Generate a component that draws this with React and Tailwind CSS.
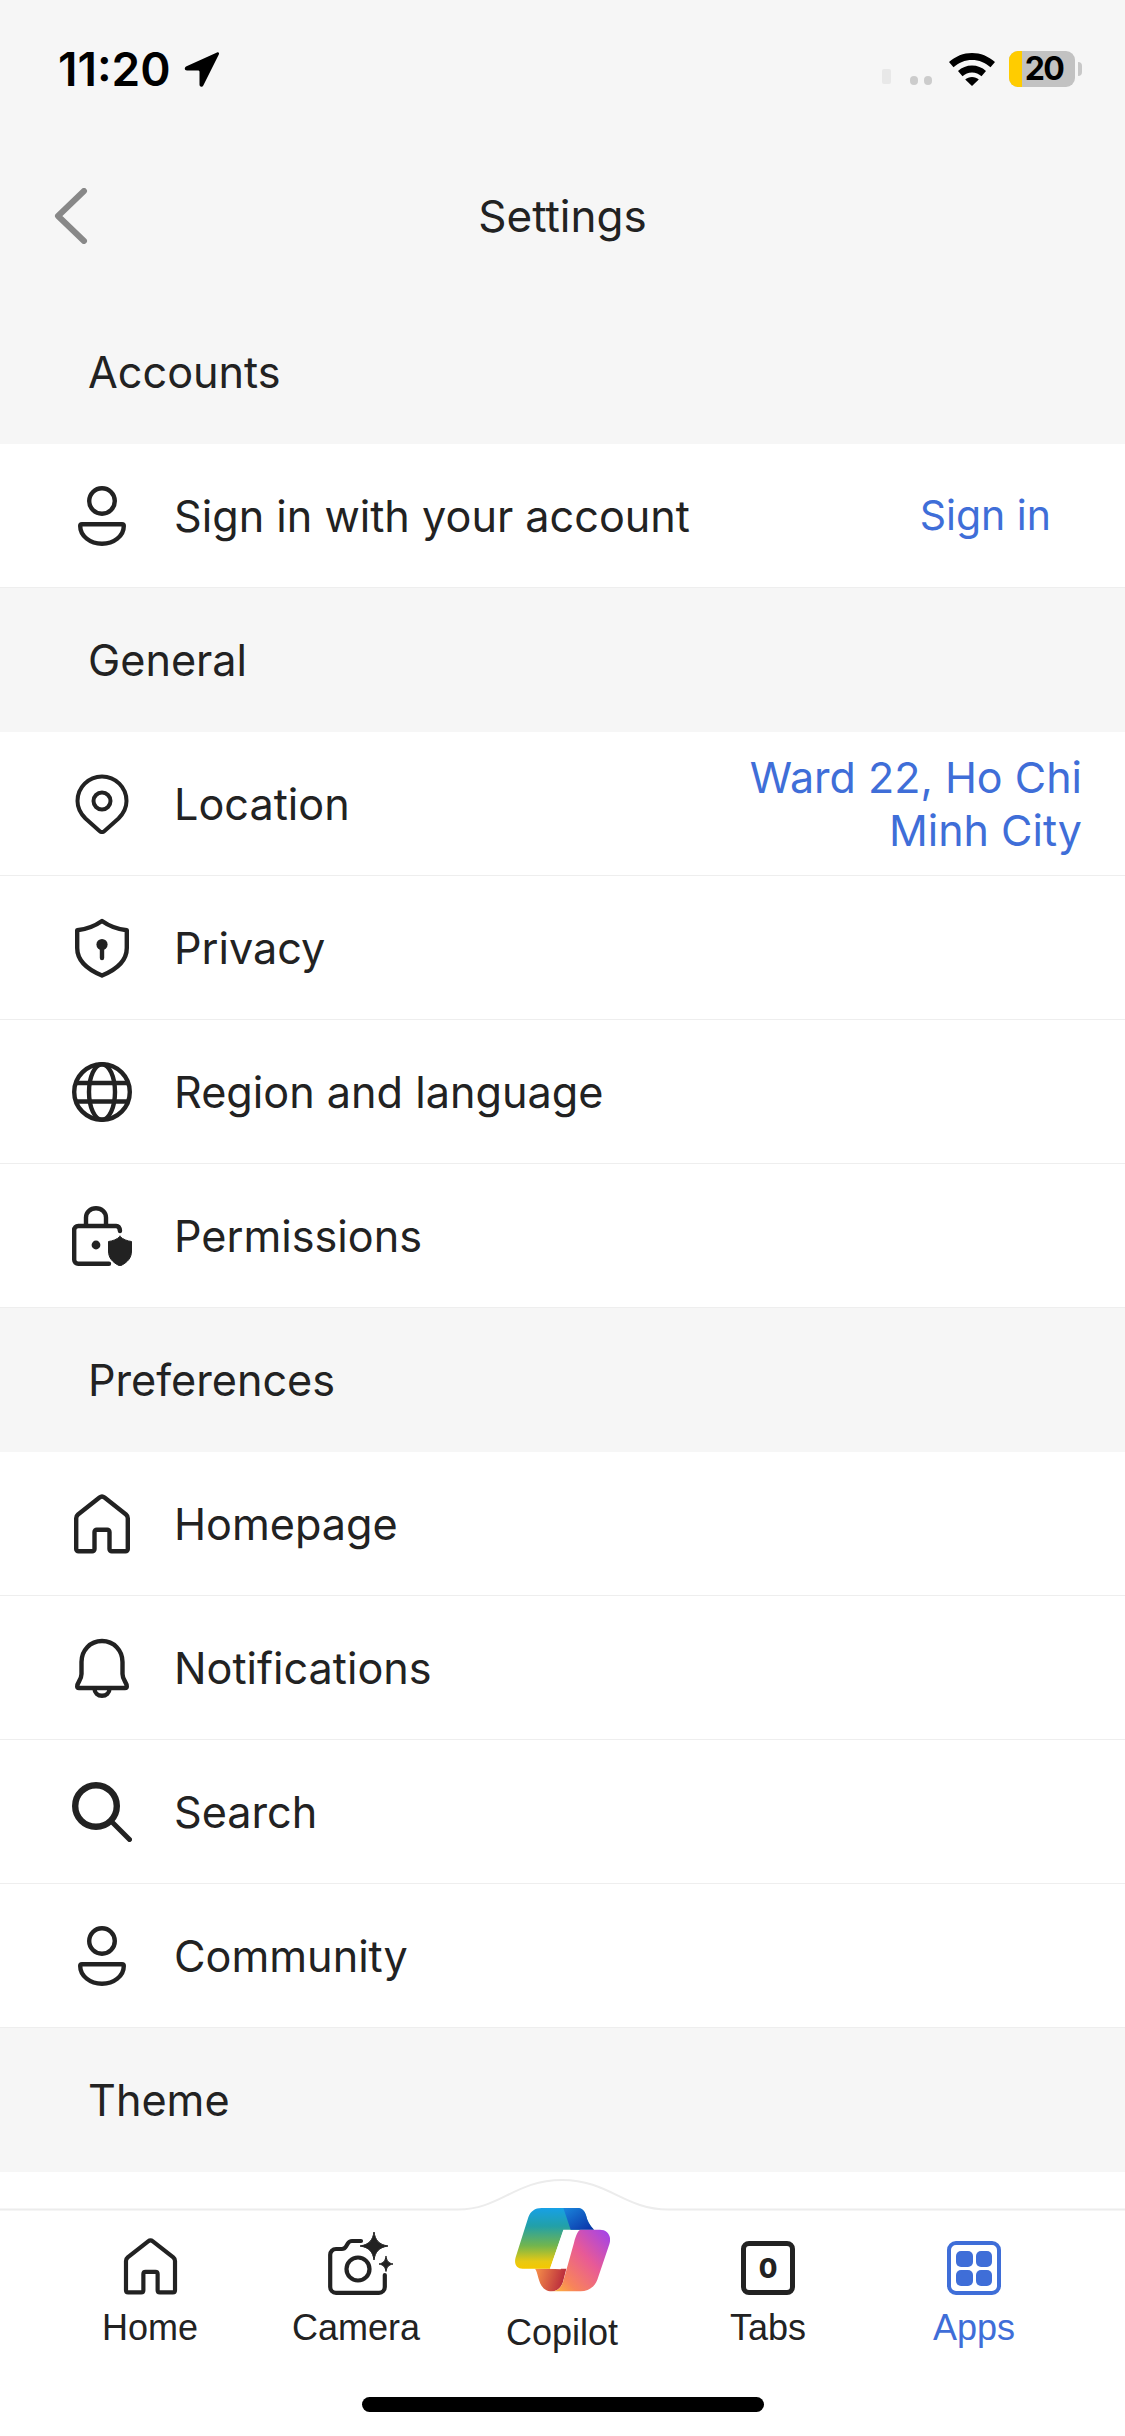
import React from "react";

const ink = "#222222";

const Stroke = ({ children, size = 60, sw = 4.4, color = ink }) => (
  <svg width={size} height={size} viewBox="0 0 60 60" fill="none" stroke={color} strokeWidth={sw} strokeLinecap="round" strokeLinejoin="round">
    {children}
  </svg>
);

const Person = () => (
  <Stroke>
    <circle cx="30" cy="15" r="12.8" />
    <path d="M10 38.2h40c1 0 1.8.8 1.8 1.8 0 10-10 17.8-21.8 17.8S8.200 50 8.200 40c0-1 .8-1.8 1.800-1.800z" />
  </Stroke>
);
const Pin = () => (
  <Stroke sw="4">
    <path d="M30 2.500C16.500 2.500 5.500 13.500 5.500 27c0 7 3 12.500 8 17.500L27.500 57c1.500 1.300 3.500 1.300 5 0L46.500 44.500c5-5 8-10.500 8-17.500C54.500 13.500 43.500 2.500 30 2.500z" />
    <circle cx="30" cy="27" r="8.500" />
  </Stroke>
);
const Shield = () => (
  <Stroke>
    <path d="M30 3c7 5 14 8 24.800 9.300V30c0 12-9 21-24.800 27.500C14.200 51 5.200 42 5.200 30V12.300C16 11 23 8 30 3z" />
    <circle cx="30" cy="26.500" r="5.600" fill={ink} stroke="none" />
    <path d="M30 28v12" />
  </Stroke>
);
const Globe = () => (
  <Stroke>
    <circle cx="30" cy="30" r="27.800" />
    <ellipse cx="30" cy="30" rx="13" ry="27.800" />
    <path d="M5 21h50M5 39.500h50" />
  </Stroke>
);
const LockShield = () => (
  <Stroke>
    <path d="M37 57.800H6.200c-2.200 0-4-1.800-4-4V24c0-2.200 1.800-4 4-4h38c2 0 3.500 1.500 3.800 5" />
    <path d="M14 19V11.500C14 6 18.500 2.200 24 2.200S34 6 34 11.500V19" />
    <circle cx="24" cy="39" r="4.400" fill={ink} stroke="none" />
    <path d="M48 30.500c3 3 7.500 4.500 11.500 5v9.500c0 7-4 11.500-11.500 15-7.500-3.500-11.500-8-11.500-15v-9.500c4-.5 8.500-2 11.500-5z" fill={ink} stroke={ink} strokeWidth="1" />
  </Stroke>
);
const House = ({ size = 60 }) => (
  <Stroke size={size}>
    <path d="M27.500 3.500 6 20.500c-1.200 1-1.800 2.200-1.800 3.700V55c0 1.300 1 2.300 2.300 2.300h13.700c1.300 0 2.300-1 2.300-2.300V38c0-1.300 1-2.300 2.300-2.300h10.400c1.300 0 2.300 1 2.300 2.300v17c0 1.300 1 2.300 2.300 2.300h13.700c1.300 0 2.300-1 2.300-2.300V24.200c0-1.500-.6-2.700-1.800-3.700L32.500 3.500c-1.500-1.200-3.500-1.200-5 0z" />
  </Stroke>
);
const Bell = () => (
  <Stroke>
    <path d="M30 3C18 3 9.500 12.500 9.500 24v12c0 3-1 5-2.500 7.500-1.200 2-1.800 3.500-1.800 5 0 1 .8 1.500 1.800 1.500h46c1 0 1.800-.5 1.800-1.500 0-1.500-.6-3-1.800-5-1.500-2.500-2.500-4.500-2.500-7.500V24C50.500 12.500 42 3 30 3z" />
    <path d="M22.500 50.500c0 4.500 3.500 7.300 7.500 7.300s7.500-2.800 7.500-7.300" />
  </Stroke>
);
const Search = () => (
  <Stroke sw="5">
    <circle cx="24" cy="24" r="20.800" strokeWidth="6.400" />
    <path d="m40 40 17.500 17.500" />
  </Stroke>
);
const CameraSpark = () => (
  <svg width="66" height="63" viewBox="0 0 66 63" fill="none" stroke={ink} strokeWidth="4.200" strokeLinecap="round" strokeLinejoin="round" className="ml-[10px]">
    <path d="M33 9h-9c-2 0-3.200.8-4.200 2.500L18 14.500c-1 1.700-2.200 2.500-4.200 2.500H8c-3.300 0-5.800 2.500-5.800 5.800v32.200c0 3.300 2.500 5.800 5.800 5.800h43c3.300 0 5.800-2.500 5.800-5.800V43" />
    <circle cx="30" cy="37" r="11.500" />
    <path d="M46 0c1.300 8.500 5 12.500 14 14-9 1.500-12.700 5.500-14 14-1.300-8.500-5-12.500-14-14 9-1.500 12.700-5.500 14-14z" fill={ink} stroke={ink} strokeWidth="1" />
    <path d="M58 24.500c.8 4.500 2.700 6.700 7 7.500-4.300.8-6.200 3-7 7.500-.8-4.500-2.700-6.700-7-7.500 4.300-.8 6.200-3 7-7.500z" fill={ink} stroke={ink} strokeWidth="1" />
  </svg>
);
const Wifi = () => (
  <svg width="46" height="33" viewBox="0 0 46 33" fill="#000">
    <path d="M23 0C14.500 0 6.500 3.300 0 9l4.500 5.300C9.500 9.700 16 7 23 7s13.500 2.700 18.500 7.300L46 9C39.500 3.300 31.500 0 23 0z" />
    <path d="M23 12.500c-5.300 0-10 2-14 5.400l4.500 5.300c2.600-2.300 5.800-3.700 9.500-3.700s6.900 1.400 9.500 3.700l4.500-5.300c-4-3.400-8.700-5.400-14-5.400z" />
    <path d="M23 24c-2.700 0-5 1-6.800 2.500L23 33l6.800-6.500C28 25 25.700 24 23 24z" />
  </svg>
);
const Copilot = () => (
  <svg width="95" height="84" viewBox="45 40 285 252">
    <defs>
      <linearGradient id="cl" x1="0" y1="0" x2="0" y2="1">
        <stop offset="0" stopColor="#17a0e6" />
        <stop offset="0.3" stopColor="#22a0a8" />
        <stop offset="0.62" stopColor="#72b54e" />
        <stop offset="0.88" stopColor="#e8c912" />
        <stop offset="1" stopColor="#f5c800" />
      </linearGradient>
      <linearGradient id="ct" x1="0" y1="0" x2="1" y2="0.2">
        <stop offset="0" stopColor="#f8924a" />
        <stop offset="1" stopColor="#b92a3c" />
      </linearGradient>
      <linearGradient id="cb" x1="0" y1="0" x2="1" y2="1">
        <stop offset="0" stopColor="#1a86dc" />
        <stop offset="1" stopColor="#0a2fa6" />
      </linearGradient>
      <linearGradient id="cr" x1="1" y1="0.05" x2="0.05" y2="1">
        <stop offset="0" stopColor="#a243ea" />
        <stop offset="0.42" stopColor="#e85a96" />
        <stop offset="0.8" stopColor="#f8845a" />
        <stop offset="1" stopColor="#fdb43c" />
      </linearGradient>
    </defs>
    <path d="M105 222c12 12 8 68 50 68 16 0 28-10 34-28l10-40z" fill="url(#ct)" />
    <path d="M125 40H232c14 0 22 8 26 22 4 16 10 30 24 43H190l-40 117H68c-18 0-27-14-21-34L85 68c6-18 20-28 40-28z" fill="url(#cl)" />
    <path d="M190 40h42c14 0 22 8 26 22 4 16 10 30 24 43h-70z" fill="url(#cb)" />
    <path d="M190 108h40l-20 40-28 76-32-2z" fill="#ffffff" />
    <path d="M242 105h58c22 0 36 18 28 44l-36 106c-8 22-28 35-50 35h-87c16 0 28-10 34-28l33-118c5-22 13-39 20-39z" fill="url(#cr)" />
  </svg>
);

const Row = ({ icon, label, right }) => (
  <div className="flex h-[144px] items-center border-b border-[#eeeeee] bg-white pl-[72px]">
    <div className="flex w-[60px] shrink-0 items-center justify-center">{icon}</div>
    <span className="ml-[42px] flex-1 text-[43.2px] leading-[52px] text-[#222222]">{label}</span>
    {right}
  </div>
);

const Header = ({ children }) => (
  <div className="flex h-[144px] items-center bg-[#f6f6f6] pl-[88px] text-[43.2px] leading-[52px] text-[#222222]">
    <span>{children}</span>
  </div>
);

const NavLabel = ({ children, active, cls }) => (
  <span className={`font-['Liberation_Sans',sans-serif] text-[36px] leading-[44px] ${active ? "text-[#3f6ed8]" : "text-[#222222]"} ${cls}`}>{children}</span>
);

const NavItem = ({ icon, label, active }) => (
  <div className="flex w-[206px] flex-col items-center">
    <div className="flex h-[85px] items-end justify-center">{icon}</div>
    <NavLabel active={active} cls="mt-[11px]">{label}</NavLabel>
  </div>
);

export default function App() {
  return (
    <div className="flex h-[2436px] w-[1125px] flex-col overflow-hidden bg-white font-['Inter',sans-serif]">
      <div className="flex h-[162px] items-start justify-between bg-[#f6f6f6] pt-[46px] pr-[43px] pl-[58px]">
        <div className="flex h-[46px] items-center">
          <span className="text-[46px] leading-[46px] font-semibold text-black">11:20</span>
          <svg width="35" height="35" viewBox="0 0 35 35" className="ml-[13px]">
            <path d="M33 .5 2 14.500c-2 1.200-1.500 4 1 4h11c1 0 1.500.5 1.500 1.500v12.500c0 2.500 2.800 3 3.800 1L34.800 2.500C35.500 1 34.500-.3 33 .5z" fill="#000" />
          </svg>
        </div>
        <div className="flex h-[46px] items-center">
          <div className="mt-[15px] h-[15px] w-[9px] rounded-[2px] bg-[#e8e8e8]" />
          <div className="mt-[23px] ml-[19px] h-[9px] w-[8px] rounded-full bg-[#cccccc]" />
          <div className="mt-[23px] ml-[6px] h-[9px] w-[8px] rounded-full bg-[#cccccc]" />
          <div className="ml-[17px] flex"><Wifi /></div>
          <div className="relative ml-[14px] flex h-[36px] w-[66px] items-center justify-center rounded-[9px] bg-[#c2c2c2] pl-[4px]">
            <div className="absolute inset-y-0 left-0 w-[13px] rounded-l-[9px] bg-[#ffcc00]" />
            <span className="relative text-[32px] leading-[32px] font-bold tracking-[-1.5px] text-black">20</span>
          </div>
          <div className="ml-[3px] h-[14px] w-[4px] rounded-r-full bg-[#c8c8c8]" />
        </div>
      </div>

      <div className="grid h-[138px] grid-cols-[1fr_auto_1fr] items-center bg-[#f6f6f6] px-[54px] pb-[30px]">
        <svg width="34" height="56" viewBox="0 0 34 56" fill="none">
          <path d="M30 3 4 28l26 25" stroke="#888888" strokeWidth="6" strokeLinecap="round" strokeLinejoin="round" />
        </svg>
        <span className="text-[44px] leading-[52px] text-[#222222]">Settings</span>
        <span />
      </div>

      <Header>Accounts</Header>
      <Row
        icon={<Person />}
        label="Sign in with your account"
        right={<span className="mr-[74px] text-[41px] leading-[53px] text-[#3f6ed8]">Sign in</span>}
      />
      <Header>General</Header>
      <Row
        icon={<Pin />}
        label="Location"
        right={
          <span className="mr-[43px] text-right text-[43px] leading-[53px] text-[#3f6ed8]">
            Ward 22, Ho Chi
            <br />
            Minh City
          </span>
        }
      />
      <Row icon={<Shield />} label="Privacy" />
      <Row icon={<Globe />} label="Region and language" />
      <Row icon={<LockShield />} label="Permissions" />
      <Header>Preferences</Header>
      <Row icon={<House />} label="Homepage" />
      <Row icon={<Bell />} label="Notifications" />
      <Row icon={<Search />} label="Search" />
      <Row icon={<Person />} label="Community" />
      <Header>Theme</Header>

      <div className="relative flex flex-1 flex-col bg-white pt-[38px]">
        <svg width="1125" height="40" viewBox="0 0 1125 40" fill="none" className="absolute top-0 left-0">
          <path d="M0 37.500H458C500 37.500 515 8 562 8s62 29.500 106 29.500H1125" stroke="#ececec" strokeWidth="2" />
        </svg>
        <div className="flex pl-[47px]">
          <NavItem icon={<House size={57} />} label="Home" />
          <NavItem icon={<CameraSpark />} label="Camera" />
          <div className="relative flex w-[206px] flex-col items-center">
            <div className="flex h-[82px] items-end justify-center"><Copilot /></div>
            <NavLabel cls="mt-[19px]">Copilot</NavLabel>
          </div>
          <NavItem
            icon={
              <div className="flex h-[54px] w-[54px] items-center justify-center rounded-[8px] border-[5px] border-[#222222]">
                <span className="text-[27px] leading-[27px] font-extrabold text-[#222222]">0</span>
              </div>
            }
            label="Tabs"
          />
          <NavItem
            icon={
              <div className="grid h-[54px] w-[54px] grid-cols-2 content-center justify-center gap-[3px] rounded-[9px] border-[4px] border-[#3f6ed8] px-[5px]">
                <div className="h-[16px] rounded-[5px] bg-[#3f6ed8]" />
                <div className="h-[16px] rounded-[5px] bg-[#3f6ed8]" />
                <div className="h-[16px] rounded-[5px] bg-[#3f6ed8]" />
                <div className="h-[16px] rounded-[5px] bg-[#3f6ed8]" />
              </div>
            }
            label="Apps"
            active
          />
        </div>
        <div className="mt-[42px] h-[15px] w-[402px] self-center rounded-full bg-black" />
      </div>
    </div>
  );
}
